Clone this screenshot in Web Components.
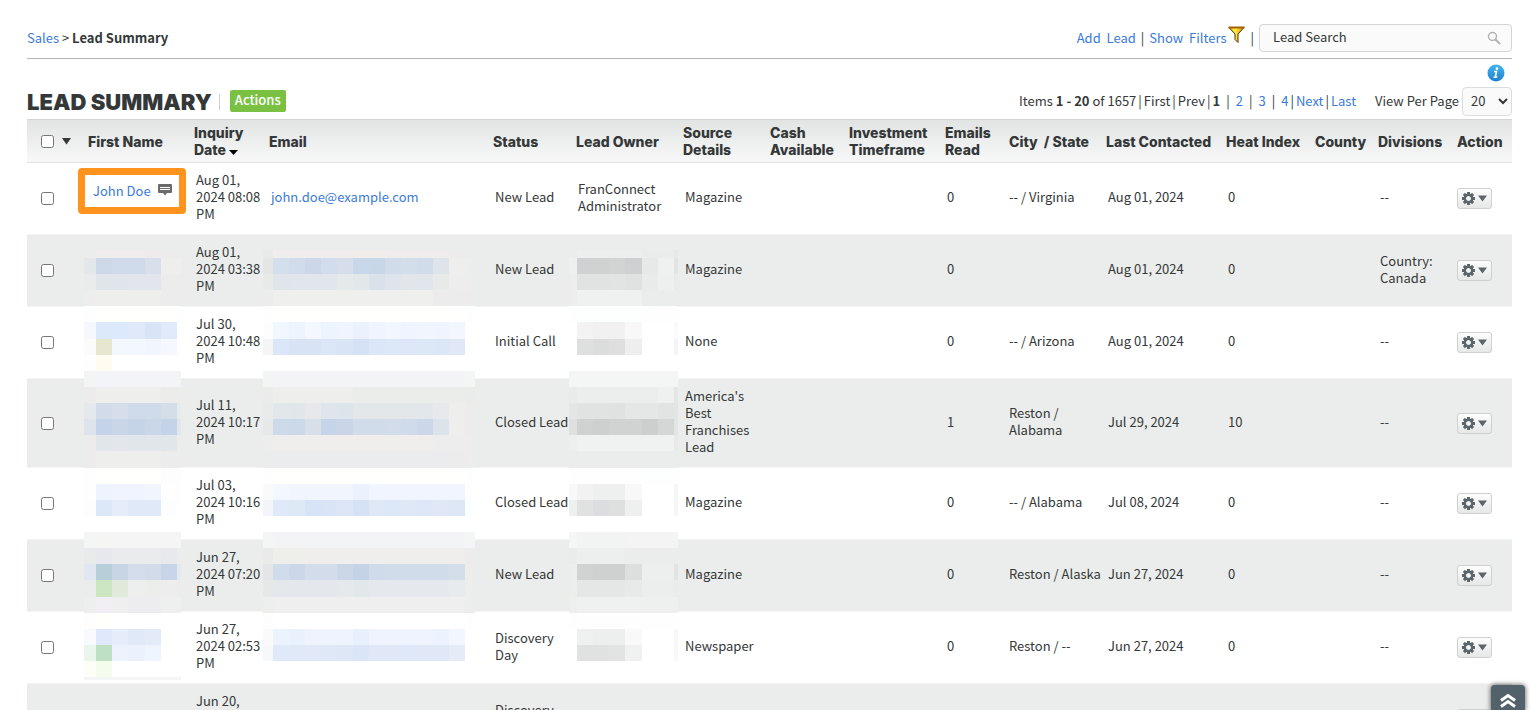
<!DOCTYPE html>
<html lang="en">
<head>
<meta charset="utf-8">
<title>Lead Summary</title>
<style>
    :root {
        --color-text: #343838;
        --color-link: #3b7ad9;
        --color-green: #7ac143;
        --color-orange: #ff931e;
        --color-row: #ebedec;
        --font-body: "Noto Sans CJK SC", "Noto Sans", sans-serif;
        --font-head: Inter, "Open Sans", sans-serif;
    }

    body {
        margin: 0;
        height: 100vh;
        overflow: hidden;
        background: #fff;
        color: var(--color-text);
        font: 13px/17px var(--font-body);
    }
</style>
</head>
<body>
<lead-page>
    <top-bar slot="top">
        <bread-crumb slot="left" section="Sales" page="Lead Summary"></bread-crumb>
        <lead-search label="Lead Search"></lead-search>
    </top-bar>
    <title-bar slot="title" heading="Lead Summary">
        <page-nav total="1657"></page-nav>
    </title-bar>
    <lead-table></lead-table>
</lead-page>
<scroll-top></scroll-top>

<script>
class LeadPage extends HTMLElement {
    constructor() {
        super();
        this.attachShadow({ mode: 'open' });
        this.shadowRoot.innerHTML = `
        <style>
            :host {
                display: block;
                padding: 24px 27px 0;
            }
        </style>
        <slot name="top"></slot>
        <slot name="title"></slot>
        <slot></slot>
        `;
    }
}

class TopBar extends HTMLElement {
    constructor() {
        super();
        this.attachShadow({ mode: 'open' });
        this.shadowRoot.innerHTML = `
        <style>
            :host {
                display: flex;
                align-items: center;
                justify-content: space-between;
                padding-bottom: 6px;
                border-bottom: 1px solid #b4b6b6;
            }

            nav {
                display: flex;
                align-items: center;
                gap: 5px;
            }

            nav > a, nav > span {
                padding-bottom: 2px;
            }

            a {
                color: var(--color-link);
                text-decoration: none;
                white-space: pre;
            }

            .filters {
                display: flex;
                align-items: center;
                gap: 2px;
            }

            svg {
                display: block;
                margin-bottom: 4px;
            }
        </style>
        <slot name="left"></slot>
        <nav>
            <a href="#add">Add  Lead</a>
            <span>|</span>
            <a class="filters" href="#filters"><span>Show  Filters</span><svg width="17" height="18" viewBox="0 0 17 18">
                <defs>
                    <linearGradient id="gold">
                        <stop offset="0" stop-color="#ffb400"/>
                        <stop offset=".4" stop-color="#fff04a"/>
                        <stop offset="1" stop-color="#e88a00"/>
                    </linearGradient>
                </defs>
                <path d="M1 1.500h15L10 8v8.500L7 13.500V8Z" fill="url(#gold)" stroke="#4a3300"/>
                <path d="M.5 1.500h16" stroke="#a35f00" stroke-width="2"/>
            </svg></a>
            <span>|</span>
            <slot></slot>
        </nav>
        `;
    }
}

class BreadCrumb extends HTMLElement {
    constructor() {
        super();
        this.attachShadow({ mode: 'open' });
    }

    connectedCallback() {
        this.shadowRoot.innerHTML = `
        <style>
            :host {
                display: block;
                padding-bottom: 2px;
            }

            a {
                color: var(--color-link);
                text-decoration: none;
            }
        </style>
        <a href="#sales">${this.getAttribute('section')}</a> &gt; <b>${this.getAttribute('page')}</b>
        `;
    }
}

class LeadSearch extends HTMLElement {
    constructor() {
        super();
        this.attachShadow({ mode: 'open' });
    }

    connectedCallback() {
        const label = this.getAttribute('label');
        this.shadowRoot.innerHTML = `
        <style>
            :host {
                display: flex;
                align-items: center;
                box-sizing: border-box;
                width: 253px;
                height: 28px;
                padding: 0 10px 0 13px;
                border: 1px solid #d3d5d5;
                border-radius: 4px;
                background: #fafafa;
            }

            input {
                flex: 1;
                min-width: 0;
                padding: 0 0 3px;
                border: 0;
                outline: 0;
                background: none;
                color: inherit;
                font: inherit;
            }

            input::placeholder {
                color: var(--color-text);
                opacity: 1;
            }
        </style>
        <input type="search" aria-label="${label}" placeholder="${label}">
        <svg width="14" height="14" viewBox="0 0 14 14" fill="none" stroke="#b3b3b3">
            <circle cx="5.500" cy="5.500" r="4" stroke-width="1.500"/>
            <path d="M8.500 8.500 12.500 12.500" stroke-width="2" stroke-linecap="round"/>
        </svg>
        `;
    }
}

class TitleBar extends HTMLElement {
    constructor() {
        super();
        this.attachShadow({ mode: 'open' });
    }

    connectedCallback() {
        this.shadowRoot.innerHTML = `
        <style>
            :host {
                display: block;
                padding: 5px 0 3px;
            }

            .help {
                display: flex;
                justify-content: flex-end;
                padding: 0 7px 5px 0;
            }

            .row {
                display: flex;
                align-items: center;
                justify-content: space-between;
            }

            .left {
                display: flex;
                align-items: center;
            }

            h1 {
                margin: 0;
                padding-right: 7px;
                font: 900 22px/28px var(--font-head);
                text-transform: uppercase;
            }

            .left i {
                width: 1px;
                height: 16px;
                background: #cdd0d0;
            }

            button {
                height: 22px;
                margin: 0 0 2px 10px;
                padding: 0 5px 2px;
                border: 0;
                border-radius: 2px;
                background: var(--color-green);
                color: #fff;
                font: 500 13px/20px var(--font-body);
            }

            svg {
                display: block;
            }
        </style>
        <div class="help">
            <svg width="18" height="18" viewBox="0 0 18 18" role="img" aria-label="Help">
                <defs>
                    <linearGradient id="blue" x2="0" y2="1">
                        <stop offset="0" stop-color="#45b8ee"/>
                        <stop offset="1" stop-color="#1c7fd0"/>
                    </linearGradient>
                </defs>
                <circle cx="9" cy="9" r="8.500" fill="url(#blue)"/>
                <circle cx="10" cy="4.700" r="1.400" fill="#fff"/>
                <path d="M7 7.500h2.500L8.300 13h2M6.500 13.300h2" fill="none" stroke="#fff" stroke-width="1.600"/>
            </svg>
        </div>
        <div class="row">
            <div class="left">
                <h1>${this.getAttribute('heading')}</h1>
                <i></i>
                <button type="button">Actions</button>
            </div>
            <slot></slot>
        </div>
        `;
    }
}

class PageNav extends HTMLElement {
    constructor() {
        super();
        this.attachShadow({ mode: 'open' });
    }

    connectedCallback() {
        this.shadowRoot.innerHTML = `
        <style>
            :host {
                display: flex;
                align-items: center;
                gap: 3px;
            }

            nav {
                display: flex;
                gap: 2px;
                padding-right: 16px;
            }

            nav, label {
                padding-bottom: 2px;
            }

            .num {
                padding: 0 4px;
            }

            .num.first {
                padding-left: 0;
            }

            .num.last {
                padding-right: 0;
            }

            a {
                color: var(--color-link);
                text-decoration: none;
            }

            select {
                box-sizing: border-box;
                width: 50px;
                height: 29px;
                padding: 0 4px 2px;
                border: 1px solid #dcdede;
                border-radius: 4px;
                background: #fafafa;
                color: inherit;
                font: inherit;
            }
        </style>
        <nav>
            <span>Items <b>1 - 20</b> of ${this.getAttribute('total')}</span>
            <span>|</span><span>First</span>
            <span>|</span><span>Prev</span>
            <span>|</span><b class="num first">1</b>
            <span>|</span><a class="num" href="#2">2</a>
            <span>|</span><a class="num" href="#3">3</a>
            <span>|</span><a class="num last" href="#4">4</a>
            <span>|</span><a href="#next">Next</a>
            <span>|</span><a href="#last">Last</a>
        </nav>
        <label for="size">View Per Page</label>
        <select id="size"><option>20</option><option>50</option><option>100</option></select>
        `;
    }
}

class RowMenu extends HTMLElement {
    constructor() {
        super();
        this.attachShadow({ mode: 'open' });
        const teeth = [0, 45, 90, 135, 180, 225, 270, 315]
            .map(a => `<rect x="5" y="0" width="3" height="4" transform="rotate(${a} 6.5 6.5)"/>`)
            .join('');
        this.shadowRoot.innerHTML = `
        <style>
            :host {
                display: block;
                white-space: normal;
            }

            button {
                display: flex;
                align-items: center;
                justify-content: center;
                gap: 3px;
                box-sizing: border-box;
                width: 35px;
                height: 21px;
                padding: 0;
                border: 1px solid #cfd1d1;
                border-radius: 3px;
                background: linear-gradient(#fdfdfd, #e6e7e7);
            }
        </style>
        <button type="button" aria-label="Row actions">
            <svg width="13" height="13" viewBox="0 0 13 13" fill="#5d656a">
                ${teeth}
                <circle cx="6.500" cy="6.500" r="3.700" fill="none" stroke="#5d656a" stroke-width="2.400"/>
            </svg>
            <svg width="9" height="7" viewBox="0 0 9 7"><path d="M0 .5h9L4.500 6.500Z" fill="#5d656a"/></svg>
        </button>
        `;
    }
}

// Colours of the hidden cells, one line per band of blocks, "*n" repeats a block.
const MASKS = {
    name: {
        edges: [0, 12, 28, 44, 61, 77, 93, 97],
        bands: [
            'ebeceb efeeec*3 edecea ebeceb*2',
            'e4e7ea cdd9e8 cfdaea*2 d9e0eb eeeeec*2',
            'e9ebec e0e5ec*2 e2e6ec*2 ececec ebeceb',
            'ecedec eeeeec*4 ebeceb*2',
            'fdfefe fffffd*5 fdfefe',
            'f5f9ff dce8fb*2 dfe9f9 d9e5f7 e0eafa fefeff',
            'fbfbfa e7e6cf f3f7fe*2 f1f6fe f5f8fe fefefe',
            'fefefe fffbf1 ffffff*5',
            'f3f5f5 f2f4f9 f3f4f7*5',
            'ebeceb eeeeec*4 ececeb*2',
            'e5e8ec d1dbea d7deeb cfdaea*2 d3dee8 e8ebec',
            'dfe3ec c4d2ea c9d6e8 c5d4e7 c9d7e8 c5d3e8 e2e6ec',
            'ebeceb e1e6ea e3e7eb e1e6ea*3 ebeceb',
            'ebeceb eeeeec*4 ebeceb*2',
            'fefefe fffffd*4 fdfdfe*2',
            'fdfeff edf4fe eff4fe*2 f1f6fe fefeff*2',
            'fbfdff dce8f8 e5edfb*1 dfe9f8 e0e9f8 fcfdff ffffff',
            'ffffff*7',
            'f4f6f5 f5f6f3 f4f5f4*5',
            'e8eaec e6e8ee e9ebed*3 e8e9ec ebeced',
            'e1e6f0 b6cfd8 c7d5e5 d3ddeb d2dbea c8d4e8 e3e9ed',
            'ebedeb cbe6c0 e0e9dc edeeee ebeeeb ededed ebeceb',
            'ecefec f1eff4 eeefee ededef*2 eeefef*2',
            'fefefe fffffb ffffff*5',
            'f8faff e0e9fc e5edfa e0e9f8 e3ebf9 ffffff*2',
            'eaf6ed bee1c5 edf2fd ebf2fd eff5fc ffffff*2',
            'fcfff8 f4fded ffffff*5',
            'f4f5f5*7'
        ]
    },
    email: {
        edges: [0, 10, 26, 42, 58, 74, 90, 106, 122, 138, 154, 170, 186, 202, 212],
        bands: [
            'e9ebea efeeec*5 efeeea*2 eeedeb*4 ebeceb*2',
            'e4e6e6 d3dfec d0dceb ccd7ea d1dcec d7deeb c9d7ea c7d7e8 d0dcea d3deeb d0dcea dee4ea eeeeec eceeed',
            'e8eaea dfe5ea e1e5ec*3 e5e9ea e2e7ea d9e1eb dfe4ec e2e6ea e1e5ec e8eaea ecedec*2',
            'ebeceb efefed*10 ebeceb*3',
            'fdfefd fffffd*12 fdfefe',
            'fbfefd f1f7fe eef4fe f4f7ff ecf4fd eff4fe ebf2fd eff4fe f2f6fd eff4fe f1f5fe eff4fe f3f6fe ffffff',
            'f5f5f5 dbe6f8 d8e4f6*2 dbe6f7 d9e4f7 d5e2f5 dbe6f8 dce8f8 dde7f7 dce8f6 dbe6f7 e0e8f8 ffffff',
            'ffffff*14',
            'f3f5f4 f3f4f6*12 f4f6f5',
            'ebecea eeeeec*5 ebedeb*7 eaecea',
            'e9ebea e1e7ea e1e6ea e6e8ec e0e5ec dde5ec e3e7ea*4 e2e7eb e7e9ec eeeeec ebeceb',
            'e7e9e9 cddae9 ccd9e8 d7dfe9 c5d4e9 cad6e7 d1dcea*2 d2dceb cfdaea ccd8ea dce3ea eeeeec ebeceb',
            'ecedec efeeec*10 ecedec*3',
            'ebedec ebecee*11 ececed ecedec',
            'fefefe fffffd*12 fdfefe',
            'fafafa f3f7ff f1f6fe*4 ebf2fd f0f5ff*6 fdfeff',
            'f4f5f8 dfe9f9 dee9f6 d7e3f6 d9e4f6 dce6f7 d5e2f5 dfe8f7 dce7f8 dfe8f7 dde7f8 e0e8f8 dde7f5 fcffff',
            'ffffff*14',
            'f4f6f5 f2f4f6*12 f4f5f6',
            'eaebe9 eeeeeb*2 efeeec*10 ebeceb',
            'e3e5e7 d0dbeb ccd8ea d2dcea*2 cbd7e6 c5d3e9 cfdaea d1dcea*4 d4deea edeeeb',
            'e6e8e8 e4e8ed*4 e6e9ec e2e7ea e5e9ed*5 e8ebed ecedec',
            'ecefec efefef*12 eceeed',
            'fdfdfd ffffff*12 fefefe',
            'f9fafa ebf3fe e9f1fc eef3fd*3 e8f0fd eef3fd*4 edf3fe f2f6fe ffffff',
            'f7f8fa dfe9f8*2 e1e9f8 dfe8f7 dde7f6 dae6f7 e0e8f7*2 dee8f8 e0e8f8*2 e6ebf8 ffffff'
        ]
    },
    owner: {
        edges: [0, 8, 24, 40, 56, 73, 89, 105, 109],
        bands: [
            'ebedec ecefee*4 e9eceb*2 e7e9e8',
            'eeefef d0d1d2 d0d2d1 d2d4d3 ced0d1 e7e9e9 eff1f0 e2e4e3',
            'ecedec e1e3e2*2 e2e4e3 e0e2e2 e9ebea eef0ef e9ebea',
            'ecedec eff1f0*4 ebedec*3',
            'fdfefe*5 fefefe*3',
            'ffffff f3f3f4 f1f1f2*2 f8f8f9 ffffff*2 fafbfa',
            'ffffff dedfdf dbdddc dfdfdf eeeeee ffffff*2 f4f5f4',
            'ffffff*8',
            'f4f6f5*8',
            'e9ebea ebeeec*5 eff1f0 e4e6e5',
            'e4e6e5 e1e3e2*2 dfe2e1 e5e7e6*2 e2e4e3 e3e5e4',
            'dee0df cfd2d0 ced0cf d1d3d2*2 cccfcd d5d7d6 e3e5e4',
            'edefee eff2f0*2 f0f2f1*4 e8eae9',
            'ebedec*8',
            'fefefe*5 fdfffe*3',
            'f7f8f7 f1f2f1 eeefef*2 f8f8f8 ffffff*2 f6f6f6',
            'eeefef e0e2e1 dbddde dee0df eeefef ffffff*2 f6f6f6',
            'ffffff*8',
            'f4f7f5 f2f4f3*3 f4f4f4*4',
            'e9eceb ecefed*3 ebedec*4',
            'eceeed d0d3d1 cfd1d0*2 dcdfdd edeeee*2 e1e4e2',
            'eceeec e5e7e6*3 e8eae9 eceeed*2 e9ecea',
            'ecefed eff1f0*4 eef0ef*3',
            'fefefe*8',
            'ffffff eff0f0 edefee*2 f8f9f8 ffffff*2 f7f8f7',
            'ffffff e0e2e1*2 e2e4e3 f0f1f1 ffffff*2 f7f8f7'
        ]
    }
};

// Pixelated cover for private data, spans all the rows below the one it sits in.
class PixelMask extends HTMLElement {
    constructor() {
        super();
        this.attachShadow({ mode: 'open' });
    }

    connectedCallback() {
        const { edges, bands } = MASKS[this.getAttribute('kind')];
        // first band is half height, last one is cut off
        const top = i => i === 0 ? 0 : Math.round(8 + (i - 1) * 16.12);
        const width = edges[edges.length - 1];
        const height = Math.min(top(bands.length), 430);
        const rects = [];

        bands.forEach((band, i) => {
            let col = 0;
            band.split(' ').forEach(run => {
                const [color, count = 1] = run.split('*');
                const end = Math.min(col + Number(count), edges.length - 1);
                const w = edges[end] - edges[col];
                rects.push(`<rect x="${edges[col]}" y="${top(i)}" width="${w}" height="${top(i + 1) - top(i)}" fill="#${color}"/>`);
                col = end;
            });
        });

        this.shadowRoot.innerHTML = `
        <style>
            :host {
                display: block;
                position: absolute;
                z-index: 1;
            }

            svg {
                display: block;
            }
        </style>
        <svg width="${width}" height="${height}" shape-rendering="crispEdges">${rects.join('')}</svg>
        `;
    }
}

class CallOut extends HTMLElement {
    constructor() {
        super();
        this.attachShadow({ mode: 'open' });
        this.shadowRoot.innerHTML = `
        <style>
            :host {
                display: flex;
                align-items: center;
                gap: 7px;
                box-sizing: border-box;
                width: 108px;
                height: 46px;
                padding: 0 0 2px 8px;
                border: 7px solid var(--color-orange);
                border-radius: 4px;
                background: #fff;
            }
        </style>
        <slot></slot>
        <svg width="14" height="12" viewBox="0 0 14 12">
            <path d="M1 0h12q1 0 1 1v7q0 1-1 1H9L7 11.500 5 9H1q-1 0-1-1V1q0-1 1-1Z" fill="#6b6b6b"/>
            <path d="M2 3.500h10M2 5.500h10" stroke="#fff"/>
        </svg>
        `;
    }
}

const COLUMNS = [
    ['', 57], ['First Name', 106], ['Inquiry\nDate', 75], ['Email', 224], ['Status', 83],
    ['Lead Owner', 107], ['Source\nDetails', 87], ['Cash\nAvailable', 79], ['Investment\nTimeframe', 96],
    ['Emails\nRead', 64], ['City  / State', 97], ['Last Contacted', 120], ['Heat Index', 89],
    ['County', 63], ['Divisions', 79], ['Action', 59]
];

// date, status, source, emails read, city / state, last contacted, heat index, divisions
const LEADS = [
    ['Aug 01,\n2024 08:08\nPM', 'New Lead', 'Magazine', '0', '-- / Virginia', 'Aug 01, 2024', '0', '--'],
    ['Aug 01,\n2024 03:38\nPM', 'New Lead', 'Magazine', '0', '', 'Aug 01, 2024', '0', 'Country:\nCanada'],
    ['Jul 30,\n2024 10:48\nPM', 'Initial Call', 'None', '0', '-- / Arizona', 'Aug 01, 2024', '0', '--'],
    ['Jul 11,\n2024 10:17\nPM', 'Closed Lead', 'America\'s\nBest\nFranchises\nLead', '1', 'Reston /\nAlabama', 'Jul 29, 2024', '10', '--'],
    ['Jul 03,\n2024 10:16\nPM', 'Closed Lead', 'Magazine', '0', '-- / Alabama', 'Jul 08, 2024', '0', '--'],
    ['Jun 27,\n2024 07:20\nPM', 'New Lead', 'Magazine', '0', 'Reston / Alaska', 'Jun 27, 2024', '0', '--'],
    ['Jun 27,\n2024 02:53\nPM', 'Discovery\nDay', 'Newspaper', '0', 'Reston / --', 'Jun 27, 2024', '0', '--'],
    ['Jun 20,\n2024\nPM', 'Discovery\nDay', '', '', '', '', '', '']
];

class LeadTable extends HTMLElement {
    constructor() {
        super();
        this.attachShadow({ mode: 'open' });
        this.shadowRoot.innerHTML = `
        <style>
            :host {
                display: block;
            }

            table {
                width: 100%;
                table-layout: fixed;
                border-collapse: separate;
                border-spacing: 0;
            }

            th, td {
                position: relative;
                text-align: left;
                vertical-align: middle;
                white-space: pre;
            }

            th {
                height: 34px;
                padding: 4px 0 4px 4px;
                border-top: 1px solid #d4d6d5;
                border-bottom: 1px solid #e2e4e3;
                font: 800 14px/17px var(--font-head);
            }

            thead tr {
                background: linear-gradient(#e2e4e3, #f8f8f8);
            }

            td {
                padding: 8px 0 12px 6px;
                border-bottom: 1px solid #f3f4f4;
            }

            tbody tr:nth-child(even) {
                background: var(--color-row);
            }

            th:first-child, td:first-child {
                padding-left: 14px;
            }

            td:first-child, td.action {
                padding-top: 10px;
                padding-bottom: 10px;
            }

            td.city, td.action {
                padding-left: 4px;
            }

            .all {
                display: flex;
                align-items: center;
                gap: 8px;
            }

            input {
                display: block;
                width: 13px;
                height: 13px;
                margin: 0;
            }

            a {
                color: var(--color-link);
                text-decoration: none;
            }

            call-out {
                position: absolute;
                left: -6px;
                top: 5px;
                z-index: 2;
            }

            pixel-mask {
                left: 0;
                top: 15px;
                white-space: normal;
            }

            .email {
                left: -2px;
            }

            .owner {
                left: -3px;
            }
        </style>
        <table>
            <colgroup></colgroup>
            <thead><tr></tr></thead>
            <tbody></tbody>
        </table>
        `;
    }

    connectedCallback() {
        const root = this.shadowRoot;
        root.querySelector('colgroup').innerHTML = COLUMNS.map(c => `<col style="width: ${c[1]}px">`).join('');
        root.querySelector('thead tr').innerHTML = COLUMNS.map((c, i) => this._head(c[0], i)).join('');
        root.querySelector('tbody').innerHTML = LEADS.map((lead, i) => this._row(lead, i)).join('');
    }

    _head(text, i) {
        if (i === 0) {
            return `<th><div class="all"><input type="checkbox" aria-label="Select all leads"><svg width="9" height="7" viewBox="0 0 9 7"><path d="M0 0h9L4.500 6.500Z" fill="#343838"/></svg></div></th>`;
        }
        const arrow = i === 2 ? ' <svg width="9" height="5" viewBox="0 0 9 5"><path d="M0 0h9L4.500 5Z"/></svg>' : '';
        return `<th>${text}${arrow}</th>`;
    }

    _row(lead, i) {
        const [date, status, source, emails, city, contacted, heat, divisions] = lead;
        let name = '';
        let email = '';
        let owner = '';

        if (i === 0) {
            name = '<call-out><a href="#lead">John Doe</a></call-out>';
            email = '<a href="mailto:john.doe@example.com">john.doe@example.com</a>';
            owner = 'FranConnect\nAdministrator';
        }
        if (i === 1) {
            name = '<pixel-mask kind="name"></pixel-mask>';
            email = '<pixel-mask class="email" kind="email"></pixel-mask>';
            owner = '<pixel-mask class="owner" kind="owner"></pixel-mask>';
        }

        return `<tr><td><input type="checkbox" aria-label="Select lead ${i + 1}"></td><td>${name}</td><td>${date}</td><td>${email}</td><td>${status}</td><td>${owner}</td><td>${source}</td><td></td><td></td><td>${emails}</td><td class="city">${city}</td><td>${contacted}</td><td>${heat}</td><td></td><td>${divisions}</td><td class="action"><row-menu></row-menu></td></tr>`;
    }
}

class ScrollTop extends HTMLElement {
    constructor() {
        super();
        this.attachShadow({ mode: 'open' });
        this.shadowRoot.innerHTML = `
        <style>
            :host {
                position: fixed;
                right: 14px;
                bottom: 0;
                z-index: 3;
            }

            button {
                display: flex;
                justify-content: center;
                width: 34px;
                height: 25px;
                padding: 8px 0 0;
                border: 0;
                border-radius: 4px 4px 0 0;
                background: #53616a;
                box-shadow: 0 0 4px 1px rgba(0, 0, 0, .5);
            }
        </style>
        <button type="button" aria-label="Back to top">
            <svg width="16" height="15" viewBox="0 0 16 15" fill="none" stroke="#fff" stroke-width="3">
                <path d="M1 7.500 8 2.500 15 7.500M1 13.500 8 8.500 15 13.500"/>
            </svg>
        </button>
        `;
    }
}

customElements.define('lead-page', LeadPage);
customElements.define('top-bar', TopBar);
customElements.define('bread-crumb', BreadCrumb);
customElements.define('lead-search', LeadSearch);
customElements.define('title-bar', TitleBar);
customElements.define('page-nav', PageNav);
customElements.define('row-menu', RowMenu);
customElements.define('pixel-mask', PixelMask);
customElements.define('call-out', CallOut);
customElements.define('lead-table', LeadTable);
customElements.define('scroll-top', ScrollTop);
</script>
</body>
</html>
